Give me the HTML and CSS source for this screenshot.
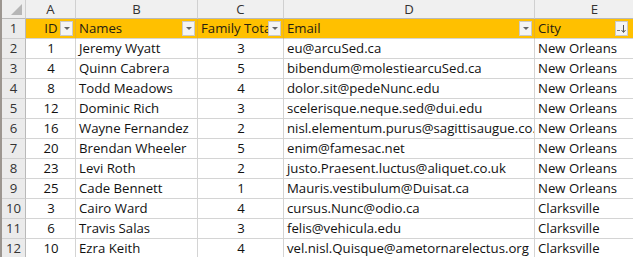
FILE: index.html
```html
<!DOCTYPE html>
<html>
<head>
<meta charset="utf-8">
<link rel="stylesheet" href="styles.css">
</head>
<body>
<div class="sheet">
  <div class="corner"><span class="tri"></span></div>
  <div class="colhdr">A</div>
  <div class="colhdr">B</div>
  <div class="colhdr">C</div>
  <div class="colhdr">D</div>
  <div class="colhdr">E</div>

  <div class="rowhdr">1</div>
  <div class="cell hd center">ID<span class="fbtn"><span class="caret"></span></span></div>
  <div class="cell hd">Names<span class="fbtn"><span class="caret"></span></span></div>
  <div class="cell hd">Family Total<span class="fbtn"><span class="caret"></span></span></div>
  <div class="cell hd">Email<span class="fbtn"><span class="caret"></span></span></div>
  <div class="cell hd">City<span class="fbtn sort"><svg width="11" height="10" viewBox="0 0 11 10"><path d="M1 6.5h3" stroke="#777" stroke-width="1"/><path d="M7.5 1v7" stroke="#555" stroke-width="1"/><path d="M5.5 6l2 2.5 2-2.5" fill="none" stroke="#555" stroke-width="1"/></svg></span></div>

  <div class="rowhdr">2</div><div class="cell center">1</div><div class="cell">Jeremy Wyatt</div><div class="cell center">3</div><div class="cell">eu@arcuSed.ca</div><div class="cell">New Orleans</div>
  <div class="rowhdr">3</div><div class="cell center">4</div><div class="cell">Quinn Cabrera</div><div class="cell center">5</div><div class="cell">bibendum@molestiearcuSed.ca</div><div class="cell">New Orleans</div>
  <div class="rowhdr">4</div><div class="cell center">8</div><div class="cell">Todd Meadows</div><div class="cell center">4</div><div class="cell">dolor.sit@pedeNunc.edu</div><div class="cell">New Orleans</div>
  <div class="rowhdr">5</div><div class="cell center">12</div><div class="cell">Dominic Rich</div><div class="cell center">3</div><div class="cell">scelerisque.neque.sed@dui.edu</div><div class="cell">New Orleans</div>
  <div class="rowhdr">6</div><div class="cell center">16</div><div class="cell">Wayne Fernandez</div><div class="cell center">2</div><div class="cell">nisl.elementum.purus@sagittisaugue.co.uk</div><div class="cell">New Orleans</div>
  <div class="rowhdr">7</div><div class="cell center">20</div><div class="cell">Brendan Wheeler</div><div class="cell center">5</div><div class="cell">enim@famesac.net</div><div class="cell">New Orleans</div>
  <div class="rowhdr">8</div><div class="cell center">23</div><div class="cell">Levi Roth</div><div class="cell center">2</div><div class="cell">justo.Praesent.luctus@aliquet.co.uk</div><div class="cell">New Orleans</div>
  <div class="rowhdr">9</div><div class="cell center">25</div><div class="cell">Cade Bennett</div><div class="cell center">1</div><div class="cell">Mauris.vestibulum@Duisat.ca</div><div class="cell">New Orleans</div>
  <div class="rowhdr">10</div><div class="cell center">3</div><div class="cell">Cairo Ward</div><div class="cell center">4</div><div class="cell">cursus.Nunc@odio.ca</div><div class="cell">Clarksville</div>
  <div class="rowhdr">11</div><div class="cell center">6</div><div class="cell">Travis Salas</div><div class="cell center">3</div><div class="cell">felis@vehicula.edu</div><div class="cell">Clarksville</div>
  <div class="rowhdr">12</div><div class="cell center">10</div><div class="cell">Ezra Keith</div><div class="cell center">4</div><div class="cell">vel.nisl.Quisque@ametornarelectus.org</div><div class="cell">Clarksville</div>
</div>
</body>
</html>
```
FILE: styles.css
```css
html, body {
  margin: 0;
  padding: 0;
  background: #ffffff;
  overflow: hidden;
}
.sheet {
  display: grid;
  grid-template-columns: 24px 50px 122px 86px 251px 120px;
  grid-template-rows: 19px repeat(12, 20px);
  font-family: "Open Sans", "Liberation Sans", sans-serif;
  font-size: 13.2px;
  color: #111;
  width: 655px;
  border-left: 2px solid #9c9690;
  box-sizing: border-box;
}
.corner {
  position: relative;
  background: #eeeeee;
  border-right: 1px solid #cfcfcf;
  border-bottom: 1px solid #b9b9b9;
}
.tri {
  position: absolute;
  right: 3px;
  bottom: 3px;
  width: 0;
  height: 0;
  border-left: 11px solid transparent;
  border-bottom: 11px solid #b6b6b6;
}
.colhdr {
  background: #f0f0f0;
  color: #333;
  text-align: center;
  line-height: 18px;
  border-right: 1px solid #d0d0d0;
  border-bottom: 1px solid #b9b9b9;
}
.rowhdr {
  background: #ebebeb;
  color: #333;
  text-align: center;
  line-height: 19px;
  border-right: 1px solid #b9b9b9;
  border-bottom: 1px solid #d0d0d0;
}
.cell {
  position: relative;
  box-sizing: border-box;
  padding: 0 2px 0 3px;
  line-height: 19px;
  white-space: nowrap;
  overflow: hidden;
  border-right: 1px solid #d4d4d4;
  border-bottom: 1px solid #d4d4d4;
}
.center {
  text-align: center;
}
.hd {
  background: #ffc000;
  color: #262010;
  border-right-color: #e5b02a;
  border-bottom-color: #d4d4d4;
}
.fbtn {
  position: absolute;
  right: 2px;
  top: 2px;
  width: 13px;
  height: 15px;
  box-sizing: border-box;
  background: #f4f4f4;
  border: 1px solid #c9c9c9;
  display: flex;
  align-items: center;
  justify-content: center;
}
.caret {
  width: 0;
  height: 0;
  border-left: 3px solid transparent;
  border-right: 3px solid transparent;
  border-top: 3px solid #666;
}
.sort {
  right: 26px;
}
```
